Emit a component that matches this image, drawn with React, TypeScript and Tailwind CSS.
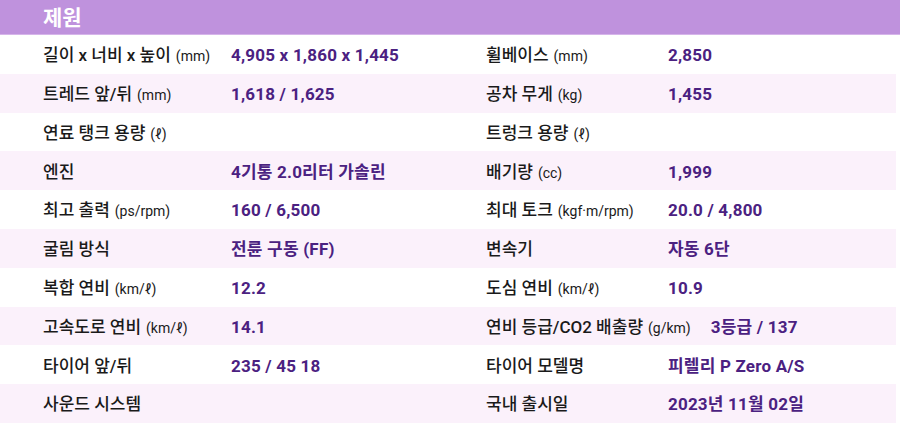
type Spec = { label: string; unit?: string; value?: string };

const rows: [Spec, Spec][] = [
  [
    { label: "길이 x 너비 x 높이", unit: "(mm)", value: "4,905 x 1,860 x 1,445" },
    { label: "휠베이스", unit: "(mm)", value: "2,850" },
  ],
  [
    { label: "트레드 앞/뒤", unit: "(mm)", value: "1,618 / 1,625" },
    { label: "공차 무게", unit: "(kg)", value: "1,455" },
  ],
  [
    { label: "연료 탱크 용량", unit: "(ℓ)" },
    { label: "트렁크 용량", unit: "(ℓ)" },
  ],
  [
    { label: "엔진", value: "4기통 2.0리터 가솔린" },
    { label: "배기량", unit: "(cc)", value: "1,999" },
  ],
  [
    { label: "최고 출력", unit: "(ps/rpm)", value: "160 / 6,500" },
    { label: "최대 토크", unit: "(kgf·m/rpm)", value: "20.0 / 4,800" },
  ],
  [
    { label: "굴림 방식", value: "전륜 구동 (FF)" },
    { label: "변속기", value: "자동 6단" },
  ],
  [
    { label: "복합 연비", unit: "(km/ℓ)", value: "12.2" },
    { label: "도심 연비", unit: "(km/ℓ)", value: "10.9" },
  ],
  [
    { label: "고속도로 연비", unit: "(km/ℓ)", value: "14.1" },
    { label: "연비 등급/CO2 배출량", unit: "(g/km)", value: "3등급 / 137" },
  ],
  [
    { label: "타이어 앞/뒤", value: "235 / 45 18" },
    { label: "타이어 모델명", value: "피렐리 P Zero A/S" },
  ],
  [
    { label: "사운드 시스템" },
    { label: "국내 출시일", value: "2023년 11월 02일" },
  ],
];

function Cell({ spec, labelWidth }: { spec: Spec; labelWidth: string }) {
  return (
    <div className="flex items-center pt-[3px]">
      <div className={`${labelWidth} shrink-0 mr-[20px] whitespace-nowrap text-[17px] font-medium text-[#1a1a1a]`}>
        {spec.label}
        {spec.unit && <span className="ml-[5px] text-[14px] font-normal">{spec.unit}</span>}
      </div>
      {spec.value && (
        <div className="whitespace-nowrap text-[17px] tracking-[0.2px] font-bold text-[#4b2181]">
          {spec.value}
        </div>
      )}
    </div>
  );
}

export default function App() {
  return (
    <div
      className="w-[900px] h-[423px] bg-white overflow-hidden"
      style={{ fontFamily: "Roboto, 'Noto Sans CJK KR', sans-serif" }}
    >
      <div className="h-[35px] bg-[#bf92dd] border-b border-[#d6b5ea] flex items-center pl-[43px] pt-[3px]">
        <h2 className="text-[21px] font-bold text-white">제원</h2>
      </div>
      {rows.map(([left, right], i) => (
        <div
          key={i}
          className={`h-[38.8px] grid grid-cols-[443px_1fr] mr-[4px] ${i % 2 === 1 ? "bg-[#fbf1fb]" : "bg-white"}`}
        >
          <div className="pl-[43px] flex items-center">
            <Cell spec={left} labelWidth="min-w-[168px]" />
          </div>
          <div className="pl-[43px] flex items-center">
            <Cell spec={right} labelWidth="min-w-[162px]" />
          </div>
        </div>
      ))}
    </div>
  );
}
